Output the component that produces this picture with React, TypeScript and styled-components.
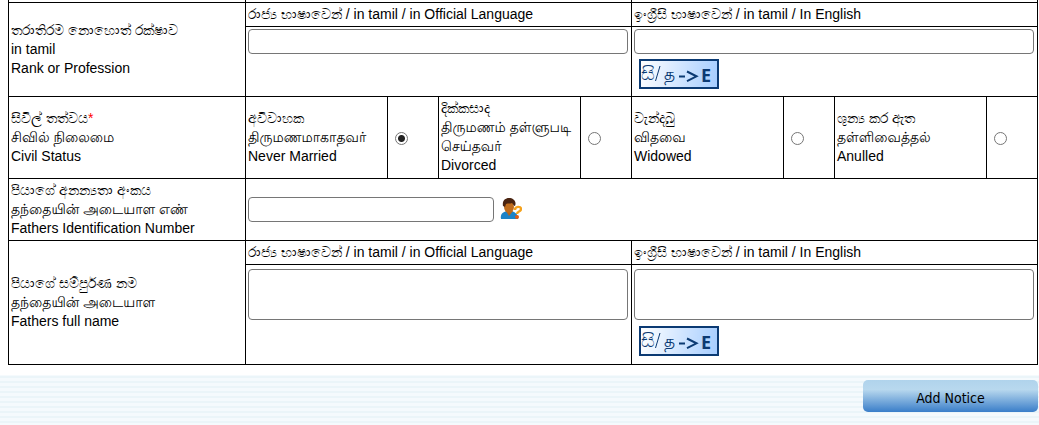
import React from "react";
import styled, { createGlobalStyle } from "styled-components";

const Global = createGlobalStyle`
  * { box-sizing: border-box; }
  html { min-height: 100%; background: #fff; }
  body {
    margin: 0;
    color: #000;
    font: 14px/19px "Liberation Sans", "LKLUG", "Lohit Tamil", sans-serif;
  }
`;

const Page = styled.form`
  display: flex;
  flex-direction: column;
  min-height: 100vh;
`;

const TableArea = styled.div`
  padding: 0 1px 10px 8px;
  background: #fff;
`;

const Table = styled.table`
  width: 100%;
  table-layout: fixed;
  border-collapse: collapse;
  border: 1px solid #000;
  border-top: 0;
`;

const Row = styled.tr<{ $height: number }>`
  height: ${(p) => p.$height}px;
`;

const Cell = styled.td<{ $top?: boolean }>`
  border: 1px solid #000;
  padding: 2px;
  text-align: left;
  font-weight: normal;
  vertical-align: ${(p) => (p.$top ? "top" : "middle")};
`;

const EdgeCell = styled.td`
  border: 1px solid #000;
  border-top: 0;
  padding: 0;
`;

const Line = styled.span`
  display: block;
  height: 19px;
  &:lang(ta) {
    text-rendering: geometricPrecision;
  }
`;

const Label = styled.label`
  display: block;
`;

const Required = styled.span`
  color: #f00;
`;

const TextBox = styled.input<{ $short?: boolean }>`
  display: block;
  width: ${(p) => (p.$short ? "246px" : "calc(100% - 1px)")};
  height: 25px;
  margin: 0;
  border: 1px solid #767676;
  border-radius: 4px;
  background: #fff;
  font: inherit;
`;

const TextArea = styled.textarea`
  display: block;
  width: calc(100% - 1px);
  height: 51px;
  margin: 2px 0 6px;
  border: 1px solid #767676;
  border-radius: 4px;
  background: #fff;
  font: inherit;
  resize: none;
`;

const Radio = styled.input`
  display: block;
  width: 13px;
  height: 13px;
  margin: 5px 5px 3px;
  appearance: none;
  border: 1px solid #767676;
  border-radius: 50%;
  background: #fff;
  &:checked {
    background: radial-gradient(circle, #222 0 3px, #fff 4px);
  }
`;

const TranslateButton = styled.button`
  display: block;
  width: 80px;
  height: 30px;
  margin: 5px;
  padding: 0;
  border: 2px solid #0b3a73;
  background: linear-gradient(100deg, #fff, #a6cdff);
`;

const Inline = styled.div`
  display: flex;
  align-items: center;
  gap: 6px;
`;

const IconButton = styled.button`
  width: 22px;
  height: 22px;
  padding: 0;
  border: 0;
  background: none;
`;

const Footer = styled.footer`
  flex: 1;
  display: flex;
  justify-content: flex-end;
  align-items: flex-start;
  padding: 5px 1px 13px;
  background: linear-gradient(to bottom, #f5fafd 0 1px, #ebf5f9 1px 3px, #f5fafd 3px) 0 0 / 5px 5px;
`;

const SubmitButton = styled.button`
  width: 175px;
  height: 32px;
  padding: 4px 0 0;
  border: 0;
  border-radius: 5px;
  background: linear-gradient(#b0d3ec, #b8d8ee 30%, #3a7ec9);
  font: 14px "DejaVu Sans Condensed", "DejaVu Sans", sans-serif;
  color: #000;
`;

function TranslateGlyphs() {
  return (
    <svg width="76" height="26" viewBox="0 0 76 26" fill="#0b3a73">
      <text x="0" y="19" fontSize="19" fontFamily="LKLUG, sans-serif">සි</text>
      <path d="M14.5 20 19 5" stroke="#0b3a73" strokeWidth="1" />
      <text x="23" y="19" fontSize="17" fontFamily="Lohit Tamil, sans-serif">த</text>
      <path d="M38 15.5h6M46 10.5l9.5 4.8-9.5 4.8" fill="none" stroke="#0b3a73" strokeWidth="2" />
      <text x="60" y="21" fontSize="18" fontWeight="bold" fontFamily="Open Sans">E</text>
    </svg>
  );
}

function PersonIcon() {
  return (
    <svg width="22" height="22" viewBox="0 0 22 22">
      <path d="M1 21c-1-5 2-8 8-8s9 3 9 8z" fill="#1c83c8" />
      <path d="M6 13l3 5 4-5z" fill="#b8651b" />
      <ellipse cx="9" cy="9" rx="5" ry="6" fill="#c06c1c" />
      <path d="M3 8C2 3 5 0 9 0s8 3 6 8c-1 0-2-2-3-3-2 1-4 0-6 1l-1 3z" fill="#4a2410" />
      <path d="M15 12c0-4 6-4 6-1 0 3-4 2-4 5" fill="none" stroke="#f5a21c" strokeWidth="2.4" />
      <circle cx="17" cy="19" r="2" fill="#df5a12" />
    </svg>
  );
}

const columns = [237, 142, 51, 142, 51, 152, 51, 152, 51];

const statuses = [
  { id: "never", lines: ["අවිවාහක", "திருமணமாகாதவர்", "Never Married"] },
  { id: "divorced", lines: ["දික්කසාද", "திருமணம் தள்ளுபடி", "செய்தவர்", "Divorced"] },
  { id: "widowed", lines: ["වැන්දබු", "விதவை", "Widowed"] },
  { id: "anulled", lines: ["ශුන්‍ය කර ඇත", "தள்ளிவைத்தல்", "Anulled"] },
];

function languageOf(line: string) {
  if (/[\u0b80-\u0bff]/.test(line)) return "ta";
  return /[\u0d80-\u0dff]/.test(line) ? "si" : "en";
}

function Lines({ lines, required }: { lines: string[]; required?: boolean }) {
  return (
    <>
      {lines.map((line, i) => (
        <Line key={line} lang={languageOf(line)}>
          {line}
          {required && i === 0 && <Required>*</Required>}
        </Line>
      ))}
    </>
  );
}

function BilingualRows(p: { id: string; lines: string[]; height: number; multiline?: boolean }) {
  const Field = (p.multiline ? TextArea : TextBox) as React.ElementType;
  return (
    <>
      <Row $height={24}>
        <Cell as="th" scope="row" rowSpan={2}>
          <Lines lines={p.lines} />
        </Cell>
        <Cell colSpan={4}>
          <Label htmlFor={p.id + "-official"}>රාජ්‍ය භාෂාවෙන් / in tamil / in Official Language</Label>
        </Cell>
        <Cell colSpan={4}>
          <Label htmlFor={p.id + "-english"}>ඉංග්‍රීසි භාෂාවෙන් / in tamil / In English</Label>
        </Cell>
      </Row>
      <Row $height={p.height}>
        <Cell colSpan={4} $top>
          <Field id={p.id + "-official"} />
        </Cell>
        <Cell colSpan={4} $top>
          <Field id={p.id + "-english"} />
          <TranslateButton type="button" aria-label="Translate to English">
            <TranslateGlyphs />
          </TranslateButton>
        </Cell>
      </Row>
    </>
  );
}

export default function App() {
  return (
    <Page onSubmit={(e) => e.preventDefault()}>
      <Global />
      <TableArea>
        <Table>
          <colgroup>
            {columns.map((width, i) => (
              <col key={i} style={{ width }} />
            ))}
          </colgroup>
          <tbody>
            <Row $height={2}>
              <EdgeCell />
              <EdgeCell colSpan={4} />
              <EdgeCell colSpan={4} />
            </Row>
            <BilingualRows id="rank" lines={["තරාතිරම නොහොත් රක්ෂාව", "in tamil", "Rank or Profession"]} height={70} />
            <Row $height={82}>
              <Cell as="th" scope="row">
                <Lines lines={["සිවිල් තත්වය", "சிவில் நிலைமை", "Civil Status"]} required />
              </Cell>
              {statuses.map((status) => (
                <React.Fragment key={status.id}>
                  <Cell>
                    <Label htmlFor={status.id}>
                      <Lines lines={status.lines} />
                    </Label>
                  </Cell>
                  <Cell>
                    <Radio type="radio" name="civil" id={status.id} defaultChecked={status.id === "never"} />
                  </Cell>
                </React.Fragment>
              ))}
            </Row>
            <Row $height={62}>
              <Cell as="th" scope="row">
                <Label htmlFor="father-id">
                  <Lines lines={["පියාගේ අනන්‍යතා අංකය", "தந்தையின் அடையாள எண்", "Fathers Identification Number"]} />
                </Label>
              </Cell>
              <Cell colSpan={8}>
                <Inline>
                  <TextBox $short id="father-id" />
                  <IconButton type="button" aria-label="Look up person">
                    <PersonIcon />
                  </IconButton>
                </Inline>
              </Cell>
            </Row>
            <BilingualRows
              id="father"
              lines={["පියාගේ සම්පුර්\u200cණ නම", "தந்தையின் அடையாள", "Fathers full name"]}
              height={100}
              multiline
            />
          </tbody>
        </Table>
      </TableArea>
      <Footer>
        <SubmitButton type="submit">Add Notice</SubmitButton>
      </Footer>
    </Page>
  );
}
